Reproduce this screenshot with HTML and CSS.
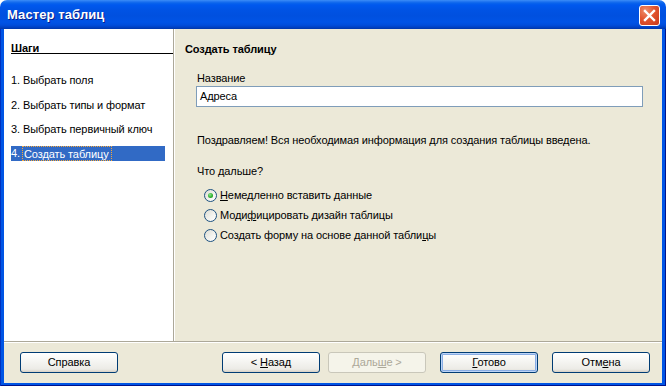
FILE: index.html
```html
<!DOCTYPE html>
<html lang="ru">
<head>
<meta charset="utf-8">
<title>Мастер таблиц</title>
<link rel="stylesheet" href="styles.css">
</head>
<body>
<div class="window">
  <div class="titlebar">
    <span class="title">Мастер таблиц</span>
    <div class="close">
      <svg width="21" height="21" viewBox="0 0 21 21">
        <path d="M6 6 L15 15 M15 6 L6 15" stroke="#fff" stroke-width="2.4" stroke-linecap="square"/>
      </svg>
    </div>
  </div>
  <div class="frame">
    <div class="client">
      <div class="main">
        <div class="steps">
          <div class="steps-head"><span>Шаги</span></div>
          <div class="step">1. Выбрать поля</div>
          <div class="step s2">2. Выбрать типы и формат</div>
          <div class="step s3">3. Выбрать первичный ключ</div>
          <div class="step s4 selected">4.<span class="focus">Создать таблицу</span></div>
        </div>
        <div class="page">
          <div class="page-head">Создать таблицу</div>
          <div class="label">Название</div>
          <div class="input">Адреса</div>
          <div class="text congrats">Поздравляем! Вся необходимая информация для создания таблицы введена.</div>
          <div class="text next">Что дальше?</div>
          <div class="radios">
            <div class="radio-row"><span class="radio checked"></span><span><u>Н</u>емедленно вставить данные</span></div>
            <div class="radio-row"><span class="radio"></span><span>Моди<u>ф</u>ицировать дизайн таблицы</span></div>
            <div class="radio-row"><span class="radio"></span><span>Создать форму на основе данной табли<u>ц</u>ы</span></div>
          </div>
        </div>
      </div>
      <div class="footer">
        <div class="btn">Справка</div>
        <div class="spacer"></div>
        <div class="btn">&lt; <u>Н</u>азад</div>
        <div class="btn disabled gap8">Даль<u>ш</u>е &gt;</div>
        <div class="btn default gap14"><u>Г</u>отово</div>
        <div class="btn gap14">Отм<u>е</u>на</div>
      </div>
    </div>
  </div>
</div>
</body>
</html>
```
FILE: styles.css
```css
html, body {
  margin: 0;
  padding: 0;
  background: #ffffff;
}
body {
  font-family: "Liberation Sans", Arial, sans-serif;
  font-size: 11px;
  letter-spacing: -0.1px;
  color: #000;
}
.window {
  width: 666px;
  height: 386px;
  display: flex;
  flex-direction: column;
}
.titlebar {
  height: 29px;
  flex: none;
  border-radius: 7px 7px 0 0;
  background: linear-gradient(to bottom,
    #3d8ff7 0px, #2a7cf3 1px, #0a64ec 3px, #0058ee 5px, #0053e4 10px,
    #0050df 16px, #0053e6 22px, #004edc 25px, #0043c8 27px, #0036a8 29px);
  display: flex;
  align-items: center;
  padding: 0 6px 0 7px;
}
.title {
  flex: 1;
  color: #fff;
  font-weight: bold;
  font-size: 13px;
  line-height: 29px;
  text-shadow: 1px 1px 0 #0a1e8a;
  letter-spacing: 0.1px;
}
.close {
  width: 21px;
  height: 21px;
  box-sizing: border-box;
  border: 1px solid #fff;
  border-radius: 3px;
  background: radial-gradient(circle at 30% 25%, #ee8f6c 0%, #e2552f 45%, #c8381a 100%);
  display: flex;
  align-items: center;
  justify-content: center;
  margin-top: 1px;
}
.close svg {
  display: block;
  margin: -1px;
}
.frame {
  flex: 1;
  padding: 0 4px 3px 4px;
  background: #0055e5;
  box-shadow: inset 1px 0 0 #0031c0, inset -1px 0 0 #00138c, inset 0 -1px 0 #00138c;
  display: flex;
}
.client {
  flex: 1;
  background: #ece9d8;
  display: flex;
  flex-direction: column;
}
.main {
  height: 312px;
  display: flex;
}
.steps {
  width: 162px;
  background: #fff;
  border-right: 1px solid #aca899;
  padding-left: 7px;
}
.steps-head {
  margin-top: 12px;
  height: 12px;
  line-height: 14px;
  font-weight: bold;
  border-bottom: 1px solid #000;
}
.steps-head span {
  text-decoration: underline;
}
.step {
  width: 154px;
  height: 15px;
  box-sizing: border-box;
  padding-top: 1px;
  line-height: 15px;
  margin-top: 18px;
  white-space: nowrap;
}
.step.s2 { margin-top: 10px; }
.step.s3 { margin-top: 9px; }
.step.s4 { margin-top: 10px; padding-top: 0; }
.step.selected {
  background: #316ac5;
  color: #fff;
}
.focus {
  display: inline-block;
  margin-left: 2px;
  height: 15px;
  box-sizing: border-box;
  border: 1px dotted #f7a83a;
  line-height: 14px;
  padding: 0 2px 0 1px;
  vertical-align: top;
}
.page {
  flex: 1;
  border-left: 1px solid #fff;
  padding-left: 10px;
  padding-right: 19px;
}
.page-head {
  margin-top: 14px;
  line-height: 13px;
  font-weight: bold;
}
.label {
  margin-top: 16px;
  margin-left: 12px;
  line-height: 13px;
}
.input {
  margin-top: 1px;
  margin-left: 11px;
  height: 21px;
  box-sizing: border-box;
  border: 1px solid #7f9db9;
  background: #fff;
  padding-left: 3px;
  line-height: 19px;
}
.text {
  margin-left: 12px;
  line-height: 13px;
}
.congrats { margin-top: 27px; }
.next { margin-top: 18px; }
.radios {
  margin-top: 7px;
  margin-left: 19px;
}
.radio-row {
  height: 20px;
  display: flex;
  align-items: center;
  gap: 3px;
  line-height: 13px;
}
.radio {
  width: 13px;
  height: 13px;
  box-sizing: border-box;
  border-radius: 50%;
  border: 1px solid #1c5180;
  background: linear-gradient(135deg, #dcdcd3 0%, #f4f4f0 60%, #ffffff 100%);
  position: relative;
  flex: none;
}
.radio.checked::after {
  content: "";
  position: absolute;
  left: 3px;
  top: 3px;
  width: 5px;
  height: 5px;
  border-radius: 50%;
  background: radial-gradient(circle at 40% 35%, #8ee68e 0%, #2fb12f 55%, #1a8a1a 100%);
}
.footer {
  flex: 1;
  border-top: 1px solid #aca899;
  box-shadow: inset 0 1px 0 #fff;
  padding: 10px 12px 0 16px;
  display: flex;
  align-items: flex-start;
}
.spacer { flex: 1; }
.btn {
  width: 98px;
  height: 21px;
  box-sizing: border-box;
  border: 1px solid #003c74;
  border-radius: 3px;
  background: linear-gradient(to bottom, #ffffff 0%, #f6f6f3 40%, #ecebe6 85%, #d6d0c5 100%);
  text-align: center;
  line-height: 19px;
  flex: none;
}
.btn.gap8 { margin-left: 8px; }
.btn.gap14 { margin-left: 14px; }
.btn.disabled {
  border-color: #c9c7ba;
  background: #f5f4ea;
  color: #aca899;
}
.btn.default {
  box-shadow: inset 0 0 0 1px #bcd4f6, inset 0 0 0 2px #89ade4;
}
```
